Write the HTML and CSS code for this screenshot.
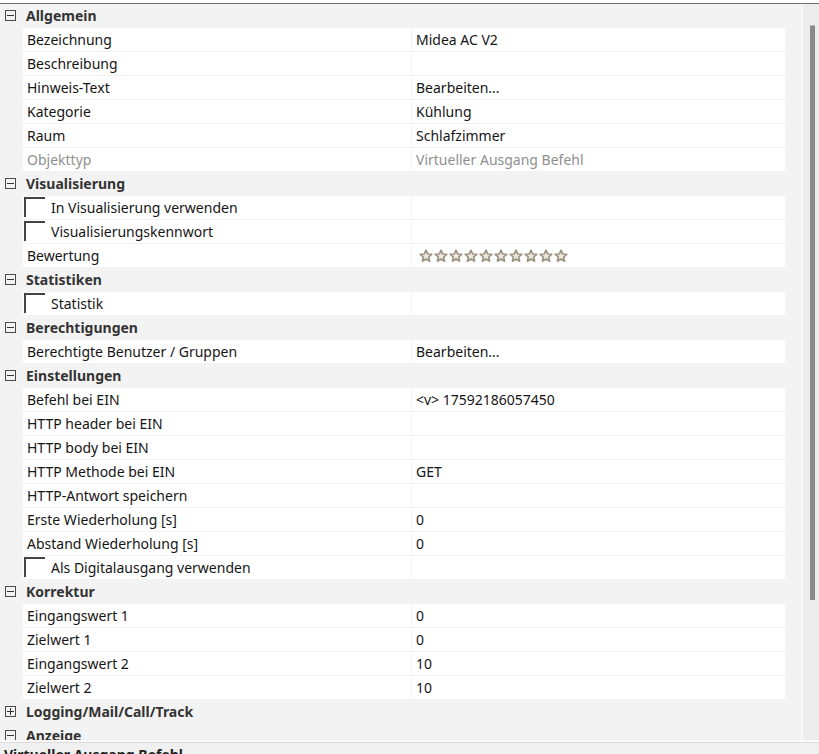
FILE: index.html
```html
<!DOCTYPE html>
<html lang="de">
<head>
<meta charset="utf-8">
<title>Eigenschaften</title>
<link rel="stylesheet" href="styles.css">
</head>
<body>
<div class="window">
  <div class="topline"></div>
  <div class="main">
    <div class="grid">
      <div class="hdr"><span class="box minus"></span><span class="htxt">Allgemein</span></div>
      <div class="row"><span class="pad"></span><span class="name">Bezeichnung</span><span class="val">Midea AC V2</span></div>
      <div class="row"><span class="pad"></span><span class="name">Beschreibung</span><span class="val"></span></div>
      <div class="row"><span class="pad"></span><span class="name">Hinweis-Text</span><span class="val">Bearbeiten...</span></div>
      <div class="row"><span class="pad"></span><span class="name">Kategorie</span><span class="val">Kühlung</span></div>
      <div class="row"><span class="pad"></span><span class="name">Raum</span><span class="val">Schlafzimmer</span></div>
      <div class="row dis"><span class="pad"></span><span class="name">Objekttyp</span><span class="val">Virtueller Ausgang Befehl</span></div>

      <div class="hdr"><span class="box minus"></span><span class="htxt">Visualisierung</span></div>
      <div class="row"><span class="pad"></span><span class="name chk"><span class="cb"></span>In Visualisierung verwenden</span><span class="val"></span></div>
      <div class="row"><span class="pad"></span><span class="name chk"><span class="cb"></span>Visualisierungskennwort</span><span class="val"></span></div>
      <div class="row"><span class="pad"></span><span class="name">Bewertung</span><span class="val stars">
        <svg class="star" viewBox="0 0 14 14"><path d="M7 1.2 8.7 5 12.8 5.3 9.7 8 10.6 12.2 7 10 3.4 12.2 4.3 8 1.2 5.3 5.3 5Z"/></svg>
        <svg class="star" viewBox="0 0 14 14"><path d="M7 1.2 8.7 5 12.8 5.3 9.7 8 10.6 12.2 7 10 3.4 12.2 4.3 8 1.2 5.3 5.3 5Z"/></svg>
        <svg class="star" viewBox="0 0 14 14"><path d="M7 1.2 8.7 5 12.8 5.3 9.7 8 10.6 12.2 7 10 3.4 12.2 4.3 8 1.2 5.3 5.3 5Z"/></svg>
        <svg class="star" viewBox="0 0 14 14"><path d="M7 1.2 8.7 5 12.8 5.3 9.7 8 10.6 12.2 7 10 3.4 12.2 4.3 8 1.2 5.3 5.3 5Z"/></svg>
        <svg class="star" viewBox="0 0 14 14"><path d="M7 1.2 8.7 5 12.8 5.3 9.7 8 10.6 12.2 7 10 3.4 12.2 4.3 8 1.2 5.3 5.3 5Z"/></svg>
        <svg class="star" viewBox="0 0 14 14"><path d="M7 1.2 8.7 5 12.8 5.3 9.7 8 10.6 12.2 7 10 3.4 12.2 4.3 8 1.2 5.3 5.3 5Z"/></svg>
        <svg class="star" viewBox="0 0 14 14"><path d="M7 1.2 8.7 5 12.8 5.3 9.7 8 10.6 12.2 7 10 3.4 12.2 4.3 8 1.2 5.3 5.3 5Z"/></svg>
        <svg class="star" viewBox="0 0 14 14"><path d="M7 1.2 8.7 5 12.8 5.3 9.7 8 10.6 12.2 7 10 3.4 12.2 4.3 8 1.2 5.3 5.3 5Z"/></svg>
        <svg class="star" viewBox="0 0 14 14"><path d="M7 1.2 8.7 5 12.8 5.3 9.7 8 10.6 12.2 7 10 3.4 12.2 4.3 8 1.2 5.3 5.3 5Z"/></svg>
        <svg class="star" viewBox="0 0 14 14"><path d="M7 1.2 8.7 5 12.8 5.3 9.7 8 10.6 12.2 7 10 3.4 12.2 4.3 8 1.2 5.3 5.3 5Z"/></svg>
      </span></div>

      <div class="hdr"><span class="box minus"></span><span class="htxt">Statistiken</span></div>
      <div class="row"><span class="pad"></span><span class="name chk"><span class="cb"></span>Statistik</span><span class="val"></span></div>

      <div class="hdr"><span class="box minus"></span><span class="htxt">Berechtigungen</span></div>
      <div class="row"><span class="pad"></span><span class="name">Berechtigte Benutzer / Gruppen</span><span class="val">Bearbeiten...</span></div>

      <div class="hdr"><span class="box minus"></span><span class="htxt">Einstellungen</span></div>
      <div class="row"><span class="pad"></span><span class="name">Befehl bei EIN</span><span class="val">&lt;v&gt; 17592186057450</span></div>
      <div class="row"><span class="pad"></span><span class="name">HTTP header bei EIN</span><span class="val"></span></div>
      <div class="row"><span class="pad"></span><span class="name">HTTP body bei EIN</span><span class="val"></span></div>
      <div class="row"><span class="pad"></span><span class="name">HTTP Methode bei EIN</span><span class="val">GET</span></div>
      <div class="row"><span class="pad"></span><span class="name">HTTP-Antwort speichern</span><span class="val"></span></div>
      <div class="row"><span class="pad"></span><span class="name">Erste Wiederholung [s]</span><span class="val">0</span></div>
      <div class="row"><span class="pad"></span><span class="name">Abstand Wiederholung [s]</span><span class="val">0</span></div>
      <div class="row"><span class="pad"></span><span class="name chk"><span class="cb"></span>Als Digitalausgang verwenden</span><span class="val"></span></div>

      <div class="hdr"><span class="box minus"></span><span class="htxt">Korrektur</span></div>
      <div class="row"><span class="pad"></span><span class="name">Eingangswert 1</span><span class="val">0</span></div>
      <div class="row"><span class="pad"></span><span class="name">Zielwert 1</span><span class="val">0</span></div>
      <div class="row"><span class="pad"></span><span class="name">Eingangswert 2</span><span class="val">10</span></div>
      <div class="row"><span class="pad"></span><span class="name">Zielwert 2</span><span class="val">10</span></div>

      <div class="hdr"><span class="box plus"></span><span class="htxt">Logging/Mail/Call/Track</span></div>
      <div class="hdr"><span class="box minus"></span><span class="htxt">Anzeige</span></div>
    </div>
    <div class="gutter"></div>
    <div class="scrollbar"><div class="thumb"></div></div>
  </div>
  <div class="footer"><span class="ftxt">Virtueller Ausgang Befehl</span></div>
</div>
</body>
</html>
```

FILE: styles.css
```css
html, body {
  margin: 0;
  padding: 0;
  background: #ffffff;
}
body {
  font-family: "Noto Sans", "Open Sans", "Liberation Sans", sans-serif;
  font-size: 14px;
  color: #151515;
}
.window {
  width: 819px;
  height: 754px;
  overflow: hidden;
  display: flex;
  flex-direction: column;
}
.topline {
  height: 3px;
  background: #ffffff;
  border-bottom: 1px solid #6e6e6e;
  flex: none;
}
.main {
  height: 736px;
  flex: none;
  display: flex;
  background: #f3f3f3;
  overflow: hidden;
}
.grid {
  width: 784px;
  flex: none;
  display: flex;
  flex-direction: column;
}
.gutter {
  width: 18px;
  flex: none;
  border-right: 1px solid #fbfbfb;
}
.scrollbar {
  flex: 1;
  background: #ececec;
  position: relative;
}
.thumb {
  position: absolute;
  left: 7px;
  top: 21px;
  width: 5px;
  height: 574px;
  background: #8a8a8a;
  border-top: 1px solid #b5b5b5;
}
.hdr {
  height: 23px;
  margin-bottom: 1px;
  display: flex;
  align-items: center;
  flex: none;
}
.htxt {
  font-weight: 700;
  color: #333333;
  margin-left: 10px;
  white-space: nowrap;
}
.box {
  width: 9px;
  height: 9px;
  border: 1px solid #4a4a4a;
  margin-left: 5px;
  position: relative;
  flex: none;
}
.box::before {
  content: "";
  position: absolute;
  left: 1px;
  top: 4px;
  width: 7px;
  height: 1px;
  background: #333333;
}
.box.plus::after {
  content: "";
  position: absolute;
  left: 4px;
  top: 1px;
  width: 1px;
  height: 7px;
  background: #333333;
}
.row {
  height: 23px;
  margin-bottom: 1px;
  display: grid;
  grid-template-columns: 22px 388px 373px;
  column-gap: 1px;
  flex: none;
}
.pad {
  background: #f3f3f3;
}
.name, .val {
  background: #ffffff;
  line-height: 23px;
  white-space: nowrap;
  overflow: hidden;
}
.name {
  padding-left: 4px;
}
.val {
  padding-left: 4px;
}
.dis .name, .dis .val {
  color: #8f8f8f;
}
.name.chk {
  padding-left: 1px;
  display: flex;
  align-items: flex-start;
}
.cb {
  width: 19px;
  height: 18px;
  margin-top: 1px;
  margin-right: 6px;
  border-top: 2px solid #444444;
  border-left: 2px solid #444444;
  flex: none;
}
.stars {
  display: flex;
  align-items: center;
  padding-left: 7px;
}
.star {
  width: 14px;
  height: 14px;
  margin-right: 1px;
  flex: none;
}
.star path {
  fill: #ebe7dc;
  stroke: #9c9480;
  stroke-width: 1.6;
  stroke-linejoin: round;
}
.footer {
  flex: 1;
  background: #f0f0f0;
  border-top: 2px solid #fafafa;
  box-shadow: inset 0 1px 0 #dcdcdc;
  overflow: hidden;
}
.ftxt {
  display: block;
  font-weight: 700;
  color: #222222;
  margin-left: 4px;
  margin-top: 3px;
  line-height: 20px;
  white-space: nowrap;
}
```
